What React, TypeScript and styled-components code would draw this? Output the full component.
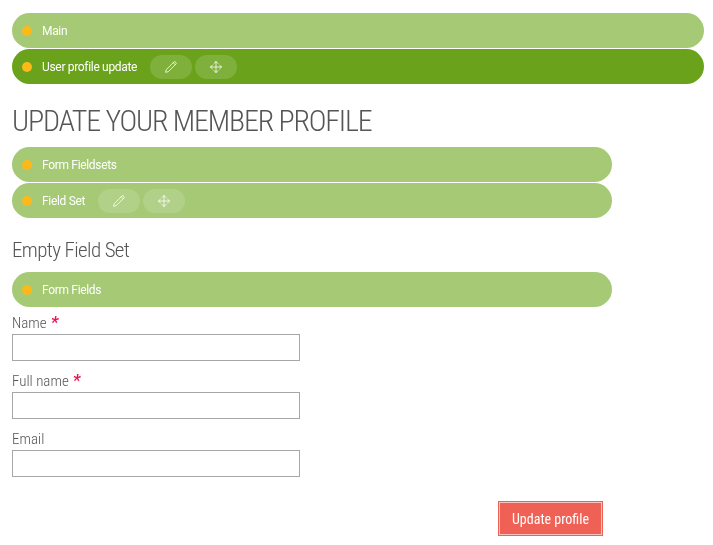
import React from "react";
import styled, { createGlobalStyle } from "styled-components";

const GlobalStyle = createGlobalStyle`
  *, *::before, *::after { box-sizing: border-box; }
  body { margin: 0; background: #fff; color: #555; font-family: "Roboto Condensed", Roboto, sans-serif; }
`;

const Page = styled.main`
  width: 692px;
  margin: 13px 0 0 12px;
  will-change: transform;
`;

const Bars = styled.div<{ $width: number }>`
  display: flex;
  flex-direction: column;
  gap: 1px;
  width: ${(p) => p.$width}px;
`;

const Bar = styled.div<{ $active?: boolean }>`
  display: flex;
  align-items: center;
  height: 35px;
  padding-left: 10px;
  border-radius: 17.5px;
  background: ${(p) => (p.$active ? "#6aa31b" : "#a5c975")};
  color: #fff;
`;

const Dot = styled.span`
  width: 10px;
  height: 10px;
  margin: 1px 10px 0 0;
  border-radius: 50%;
  background: #fdb91a;
`;

const BarLabel = styled.span`
  padding-top: 1px;
  font: 400 12px/36px Roboto, sans-serif;
  letter-spacing: -0.32px;
  white-space: nowrap;
`;

const Actions = styled.div`
  display: flex;
  gap: 3px;
  margin-left: 12.6px;
`;

const Action = styled.button`
  display: flex;
  align-items: center;
  justify-content: center;
  width: 42px;
  height: 24px;
  padding: 1px 0 0;
  border: 0;
  border-radius: 12px;
  background: rgba(255, 255, 255, 0.14);
  color: #fff;
`;

const Title = styled.h1`
  height: 36px;
  margin: 19px 0 8px;
  font-weight: 300;
  font-stretch: 75%;
  font-size: 30px;
  line-height: 36px;
  letter-spacing: -1.2px;
  white-space: nowrap;
`;

const Subtitle = styled.h2`
  height: 26px;
  margin: 19px 0 9px;
  font-weight: 300;
  font-stretch: 75%;
  font-size: 21px;
  line-height: 26px;
  letter-spacing: -0.62px;
  white-space: nowrap;
`;

const Form = styled.form`
  display: flex;
  flex-direction: column;
  width: 600px;
  padding-top: 6px;
`;

const Field = styled.label`
  display: flex;
  flex-direction: column;
  width: 288px;
  height: 58px;
`;

const FieldLabel = styled.span`
  height: 21px;
  font-weight: 300;
  font-stretch: 75%;
  font-size: 15px;
  line-height: 20px;
`;

const Required = styled.span`
  margin-left: 4px;
  color: #ed1651;
  font-size: 17px;
  line-height: 1;
  font-weight: 700;
  font-style: italic;
`;

const Input = styled.input`
  width: 288px;
  height: 27px;
  border: 1px solid #a7a7a7;
  border-radius: 0;
  background: #fff;
`;

const Submit = styled.button`
  align-self: flex-end;
  width: 105px;
  height: 35px;
  margin: 14px 9px 0 0;
  padding: 1px;
  border: 0;
  background: #f06155;
  color: #fff;
  font: 400 14px Roboto, sans-serif;
  font-stretch: 75%;
`;

const SubmitFace = styled.span`
  display: block;
  height: 33px;
  border: 1px solid #f9c4bf;
  line-height: 32px;
  white-space: nowrap;
`;

const Pencil = () => (
  <svg width="12" height="12" viewBox="0 0 12 12" fill="none" stroke="currentColor" strokeWidth="0.8" strokeLinejoin="round">
    <path d="M.6 11.3 1.2 8.7 9 .9Q9.7.4 10.4 1L11 1.6Q11.6 2.3 11 3L3.2 10.7ZM8.2 1.7l2.1 2.1" />
  </svg>
);

const Move = () => (
  <svg width="12" height="12" viewBox="0 0 12 12" fill="none" stroke="currentColor" strokeWidth="0.8" strokeLinecap="round" strokeLinejoin="round">
    <path d="M6 .5v11M.5 6h11M4 2.5 6 .5l2 2M4 9.5l2 2 2-2M2.5 4l-2 2 2 2M9.5 4l2 2-2 2" />
  </svg>
);

type EditBarProps = { label: string; active?: boolean; editable?: boolean };

const EditBar = ({ label, active, editable }: EditBarProps) => (
  <Bar $active={active}>
    <Dot />
    <BarLabel>{label}</BarLabel>
    {editable && (
      <Actions>
        <Action type="button" aria-label="Edit"><Pencil /></Action>
        <Action type="button" aria-label="Move"><Move /></Action>
      </Actions>
    )}
  </Bar>
);

const fields = [
  { label: "Name", required: true },
  { label: "Full name", required: true },
  { label: "Email", required: false },
];

export default function App() {
  return (
    <>
      <GlobalStyle />
      <Page>
        <Bars $width={692}>
          <EditBar label="Main" />
          <EditBar label="User profile update" active editable />
        </Bars>
        <Title>UPDATE YOUR MEMBER PROFILE</Title>
        <Bars $width={600}>
          <EditBar label="Form Fieldsets" />
          <EditBar label="Field Set" editable />
        </Bars>
        <Subtitle>Empty Field Set</Subtitle>
        <Bars $width={600}>
          <EditBar label="Form Fields" />
        </Bars>
        <Form onSubmit={(e) => e.preventDefault()}>
          {fields.map((f) => (
            <Field key={f.label}>
              <FieldLabel>
                {f.label}
                {f.required && <Required>*</Required>}
              </FieldLabel>
              <Input type="text" />
            </Field>
          ))}
          <Submit type="submit"><SubmitFace>Update profile</SubmitFace></Submit>
        </Form>
      </Page>
    </>
  );
}
